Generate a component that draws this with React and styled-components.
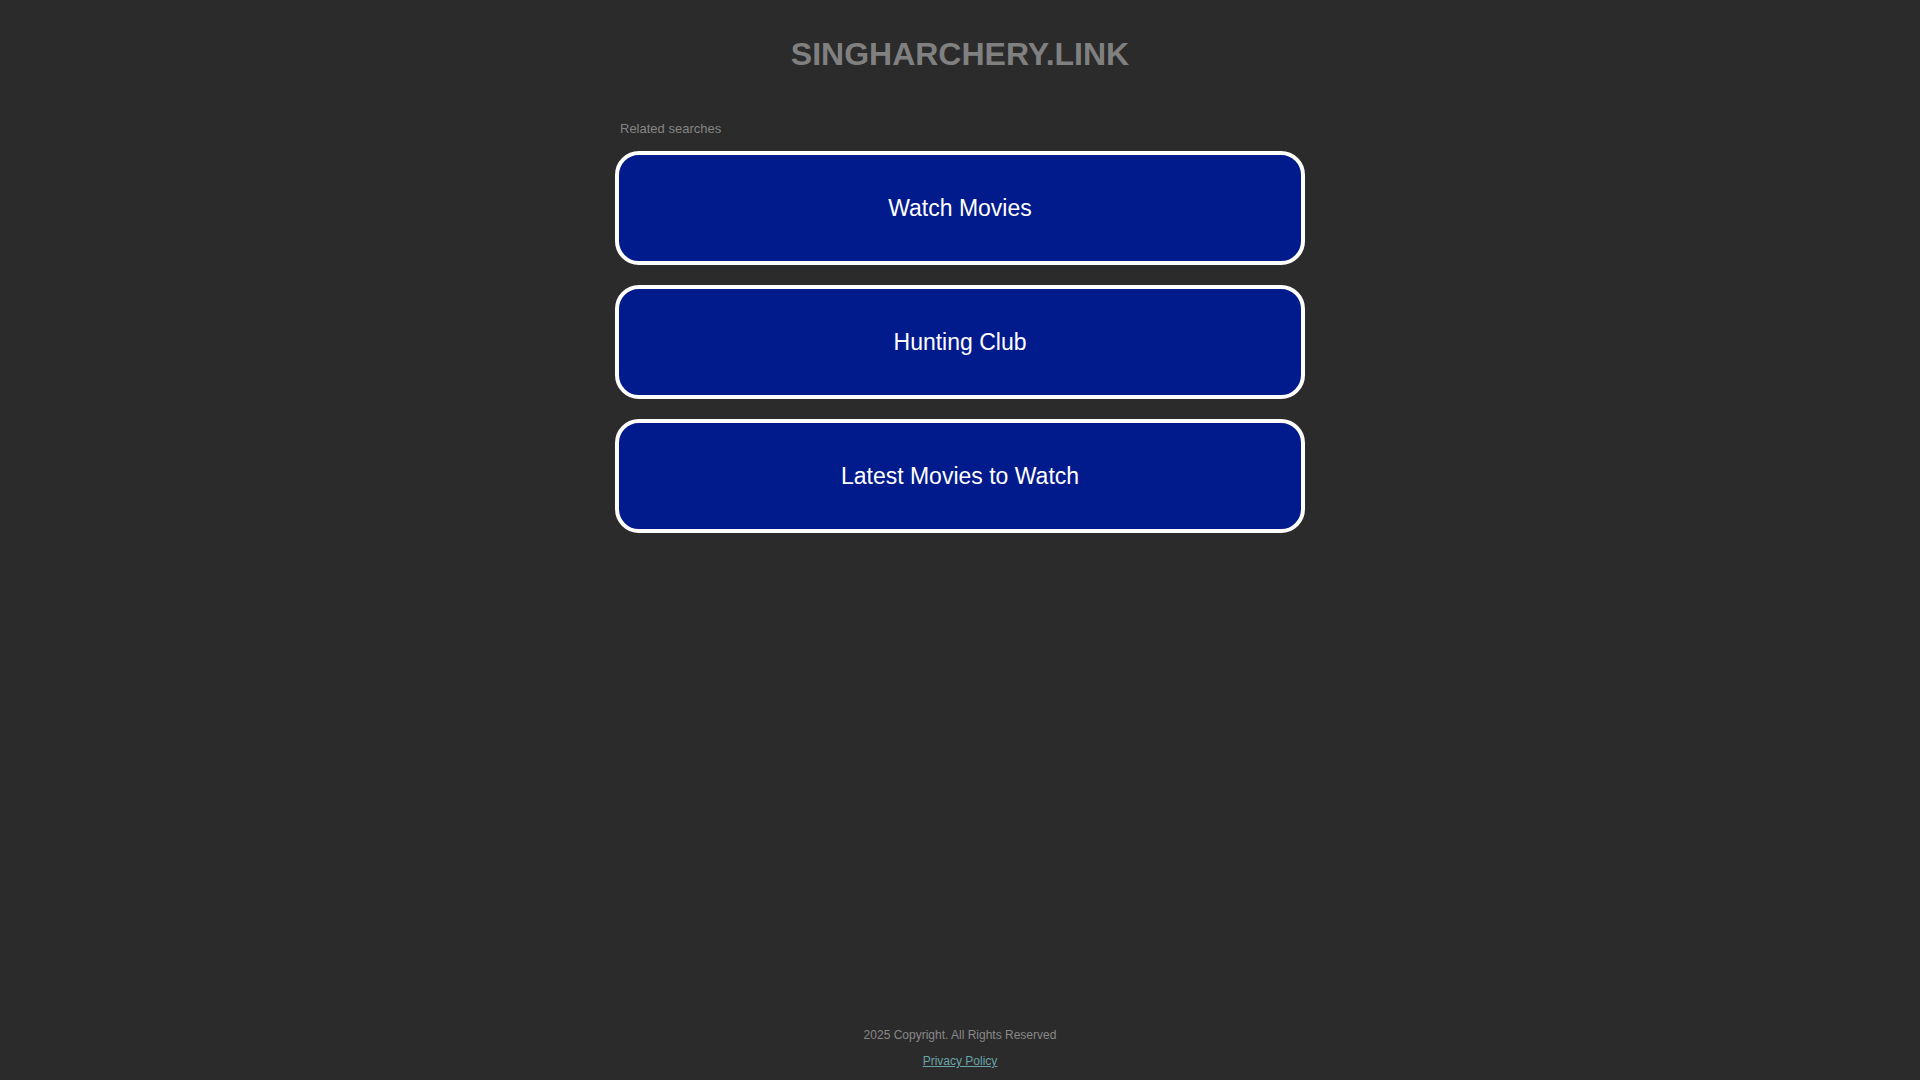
import React from "react";
import styled, { createGlobalStyle } from "styled-components";

const Global = createGlobalStyle`
  html, body { margin: 0; padding: 0; background: #2b2b2b; }
  body { font-family: "Liberation Sans", Arial, sans-serif; }
`;

const Page = styled.div`
  min-height: 100vh;
  display: flex;
  flex-direction: column;
  align-items: center;
`;

const Title = styled.h1`
  margin: 0;
  padding-top: 36px;
  font-size: 32px;
  line-height: 36px;
  font-weight: bold;
  color: #808080;
  text-align: center;
`;

const Content = styled.main`
  width: 690px;
  margin-top: 49px;
  display: flex;
  flex-direction: column;
`;

const Label = styled.div`
  font-size: 13px;
  line-height: 16px;
  color: #858585;
  padding-left: 5px;
  margin-bottom: 14px;
`;

const List = styled.div`
  display: flex;
  flex-direction: column;
  gap: 20px;
`;

const Item = styled.a`
  box-sizing: border-box;
  height: 114px;
  display: flex;
  align-items: center;
  justify-content: center;
  background: #011a8c;
  border: 4px solid #ffffff;
  border-radius: 24px;
  color: #ffffff;
  font-size: 23px;
  text-decoration: none;
  cursor: pointer;
`;

const Footer = styled.footer`
  margin-top: auto;
  padding-bottom: 11px;
  display: flex;
  flex-direction: column;
  align-items: center;
  gap: 10px;
  font-size: 12px;
  line-height: 16px;
`;

const Copy = styled.div`
  color: #888888;
`;

const Privacy = styled.a`
  color: #6aa3a8;
  text-decoration: underline;
`;

const items = ["Watch Movies", "Hunting Club", "Latest Movies to Watch"];

export default function App() {
  return (
    <>
      <Global />
      <Page>
        <Title>SINGHARCHERY.LINK</Title>
        <Content>
          <Label>Related searches</Label>
          <List>
            {items.map((t) => (
              <Item key={t}>{t}</Item>
            ))}
          </List>
        </Content>
        <Footer>
          <Copy>2025 Copyright. All Rights Reserved</Copy>
          <Privacy href="#">Privacy Policy</Privacy>
        </Footer>
      </Page>
    </>
  );
}
